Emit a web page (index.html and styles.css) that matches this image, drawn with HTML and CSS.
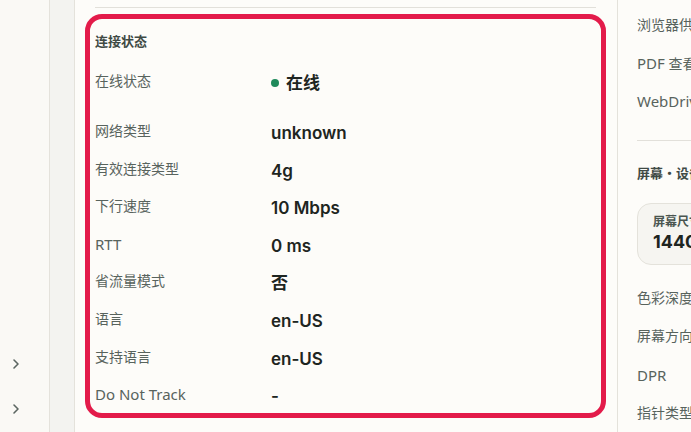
FILE: index.html
```html
<!DOCTYPE html>
<html lang="zh-CN">
<head>
<meta charset="utf-8">
<link rel="stylesheet" href="styles.css">
</head>
<body>
<div class="app">
  <aside class="sidebar">
    <div class="nav-items">
      <div class="nav-item"><svg width="8" height="12" viewBox="0 0 8 12"><path d="M2 2 L6 6 L2 10" fill="none" stroke="#5b6661" stroke-width="1.6" stroke-linecap="round" stroke-linejoin="round"/></svg></div>
      <div class="nav-item"><svg width="8" height="12" viewBox="0 0 8 12"><path d="M2 2 L6 6 L2 10" fill="none" stroke="#5b6661" stroke-width="1.6" stroke-linecap="round" stroke-linejoin="round"/></svg></div>
    </div>
  </aside>
  <div class="rail"></div>
  <main class="main">
    <div class="divider"></div>
    <section class="card-section">
      <h3 class="section-title">连接状态</h3>
      <div class="rows">
        <div class="row row-first"><span class="label">在线状态</span><span class="value"><span class="dot"></span>在线</span></div>
        <div class="row"><span class="label">网络类型</span><span class="value">unknown</span></div>
        <div class="row"><span class="label">有效连接类型</span><span class="value">4g</span></div>
        <div class="row"><span class="label">下行速度</span><span class="value">10 Mbps</span></div>
        <div class="row"><span class="label latin">RTT</span><span class="value">0 ms</span></div>
        <div class="row"><span class="label">省流量模式</span><span class="value">否</span></div>
        <div class="row"><span class="label">语言</span><span class="value">en-US</span></div>
        <div class="row"><span class="label">支持语言</span><span class="value">en-US</span></div>
        <div class="row"><span class="label latin">Do Not Track</span><span class="value">-</span></div>
      </div>
    </section>
  </main>
  <section class="side">
    <div class="side-row">浏览器供应商</div>
    <div class="side-row"><span class="latin">PDF</span> 查看器</div>
    <div class="side-row latin">WebDriver</div>
    <div class="side-divider"></div>
    <h3 class="side-title">屏幕・设备</h3>
    <div class="stat-card">
      <div class="stat-label">屏幕尺寸</div>
      <div class="stat-value">1440 × 900</div>
    </div>
    <div class="side-rows2">
      <div class="side-row">色彩深度</div>
      <div class="side-row">屏幕方向</div>
      <div class="side-row latin">DPR</div>
      <div class="side-row">指针类型</div>
    </div>
  </section>
</div>
</body>
</html>
```

FILE: styles.css
```css
html, body {
  margin: 0;
  padding: 0;
}
body {
  width: 691px;
  height: 432px;
  overflow: hidden;
  background: #fdfcf9;
  font-family: "Noto Sans", "Noto Sans CJK SC", sans-serif;
  color: #1e2521;
}
.app {
  display: flex;
  height: 432px;
}
.sidebar {
  width: 49px;
  flex: none;
  background: #faf9f5;
  border-right: 1px solid #e4e2db;
  display: flex;
  flex-direction: column;
  justify-content: flex-end;
}
.nav-items {
  display: flex;
  flex-direction: column;
  gap: 33px;
  padding: 0 0 17px 12px;
}
.nav-item {
  height: 12px;
  display: flex;
}
.rail {
  width: 24px;
  flex: none;
  background: #f3f3f0;
  border-right: 1px solid #e4e2db;
}
.main {
  width: 501px;
  flex: none;
  padding: 7px 21px 0 20px;
  background: #fdfcf9;
}
.divider {
  height: 1px;
  background: #e2e0da;
  margin-bottom: 6px;
}
.card-section {
  margin: 0 -10px;
  padding: 12px 5px 5px;
  border: 5px solid #e31b4a;
  border-radius: 17px;
}
.section-title {
  margin: 0;
  font-size: 13px;
  line-height: 20px;
  font-weight: 700;
  color: #3f4a45;
}
.rows {
  margin-top: 20px;
  display: flex;
  flex-direction: column;
  gap: 13.6px;
}
.row {
  display: grid;
  grid-template-columns: 176px 1fr;
  align-items: start;
}
.row-first {
  margin-bottom: 12.4px;
}
.label {
  font-size: 14px;
  line-height: 20px;
  color: #58635d;
}
.latin {
  font-size: 15px;
}
.value {
  font-family: "Inter", "Noto Sans CJK SC", sans-serif;
  font-size: 17px;
  line-height: 24px;
  font-weight: 600;
  color: #1e2521;
  display: flex;
  align-items: center;
}
.dot {
  width: 8px;
  height: 8px;
  border-radius: 50%;
  background: #1f8a5b;
  margin-right: 7px;
}
.side {
  flex: 1;
  border-left: 1px solid #e4e2db;
  padding: 15px 0 0 19px;
  min-width: 0;
  overflow: hidden;
  white-space: nowrap;
}
.side-row {
  font-size: 14px;
  line-height: 20px;
  color: #58635d;
  margin-bottom: 17.5px;
}
.side-row.latin {
  font-size: 15px;
}
.side-divider {
  height: 1px;
  background: #e2e0da;
  margin-top: 29px;
  width: 200px;
}
.side-title {
  margin: 22px 0 0;
  font-size: 13px;
  line-height: 20px;
  font-weight: 700;
  color: #3f4a45;
}
.stat-card {
  margin-top: 20px;
  width: 200px;
  height: 62px;
  box-sizing: border-box;
  border: 1px solid #e4e2db;
  border-radius: 14px;
  background: #f6f5f1;
  padding: 10px 0 0 15px;
}
.stat-label {
  font-size: 12px;
  line-height: 16px;
  font-weight: 700;
  color: #4a5550;
}
.stat-value {
  font-family: "Inter", sans-serif;
  font-size: 18px;
  line-height: 24px;
  font-weight: 700;
  color: #1e2521;
}
.side-rows2 {
  margin-top: 23px;
}
.side-rows2 .side-row {
  margin-bottom: 18.3px;
}
```
